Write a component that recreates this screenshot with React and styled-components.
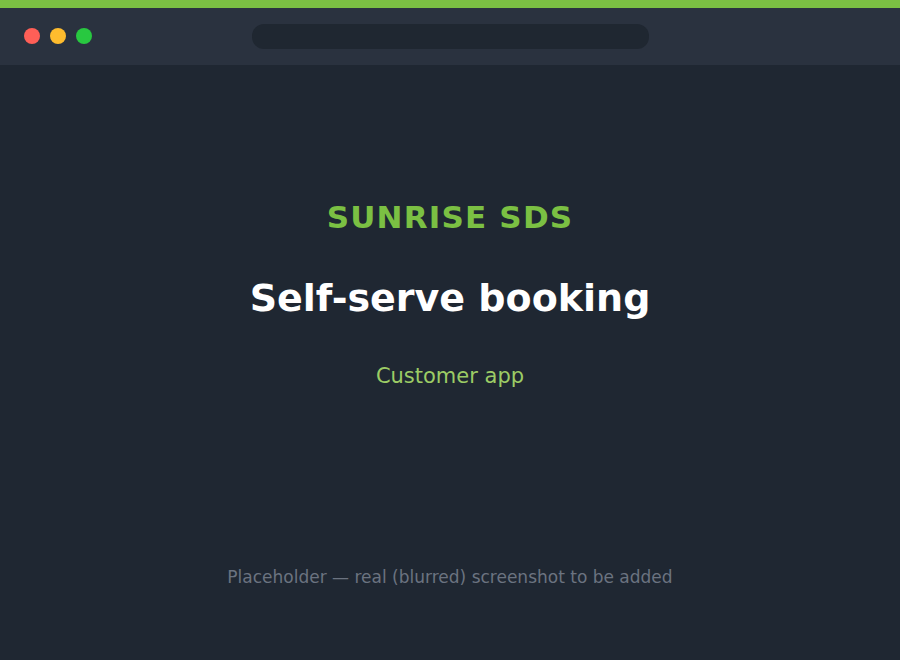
import React from 'react';
import styled, { createGlobalStyle } from 'styled-components';

const GlobalStyle = createGlobalStyle`
  html, body {
    margin: 0;
    padding: 0;
    background: #1f2732;
  }

  body {
    font-family: "DejaVu Sans", Verdana, sans-serif;
  }
`;

const dots = ['#ff5f57', '#febc2e', '#28c840'];

export default function App () {
  return (
    <>
      <GlobalStyle />
      <Window>
        <AccentBar />
        <TitleBar>
          <Dots>
            {dots.map(color => <Dot key={color} color={color} />)}
          </Dots>
          <UrlBar />
        </TitleBar>
        <Content>
          <Hero>
            <Brand>SUNRISE SDS</Brand>
            <Title>Self-serve booking</Title>
            <Subtitle>Customer app</Subtitle>
          </Hero>
          <Note>Placeholder — real (blurred) screenshot to be added</Note>
        </Content>
      </Window>
    </>
  );
}

const Window = styled.div`
  width: 900px;
  height: 660px;
  display: flex;
  flex-direction: column;
  background-color: #1f2732;
  overflow: hidden;
`;

const AccentBar = styled.div`
  height: 8px;
  background-color: #7bc043;
  flex-shrink: 0;
`;

const TitleBar = styled.header`
  height: 57px;
  flex-shrink: 0;
  background-color: #2a323f;
  padding: 0 24px;
  box-sizing: border-box;

  display: flex;
  align-items: center;
`;

const Dots = styled.div`
  display: flex;
  gap: 10px;
  margin-top: -2px;
`;

const Dot = styled.span`
  width: 16px;
  height: 16px;
  border-radius: 50%;
  background-color: ${props => props.color};
`;

const UrlBar = styled.div`
  width: 397px;
  height: 25px;
  border-radius: 12px;
  background-color: #1f2731;
  margin: 0 0 0 160px;
`;

const Content = styled.main`
  flex: 1;
  display: flex;
  flex-direction: column;
  align-items: center;
  text-align: center;
`;

const Hero = styled.div`
  display: flex;
  flex-direction: column;
  align-items: center;
  padding-top: 132px;
`;

const Brand = styled.div`
  color: #7bc043;
  font-size: 31px;
  font-weight: bold;
  letter-spacing: 1.2px;
  line-height: 40px;
`;

const Title = styled.h1`
  color: #ffffff;
  font-size: 38px;
  font-weight: bold;
  line-height: 46px;
  margin: 38px 0 0;
`;

const Subtitle = styled.div`
  color: #9ccc65;
  font-size: 21px;
  line-height: 26px;
  margin: 42px 0 0;
`;

const Note = styled.div`
  color: #6b7380;
  font-size: 17px;
  line-height: 20px;
  margin-top: 178px;
`;
